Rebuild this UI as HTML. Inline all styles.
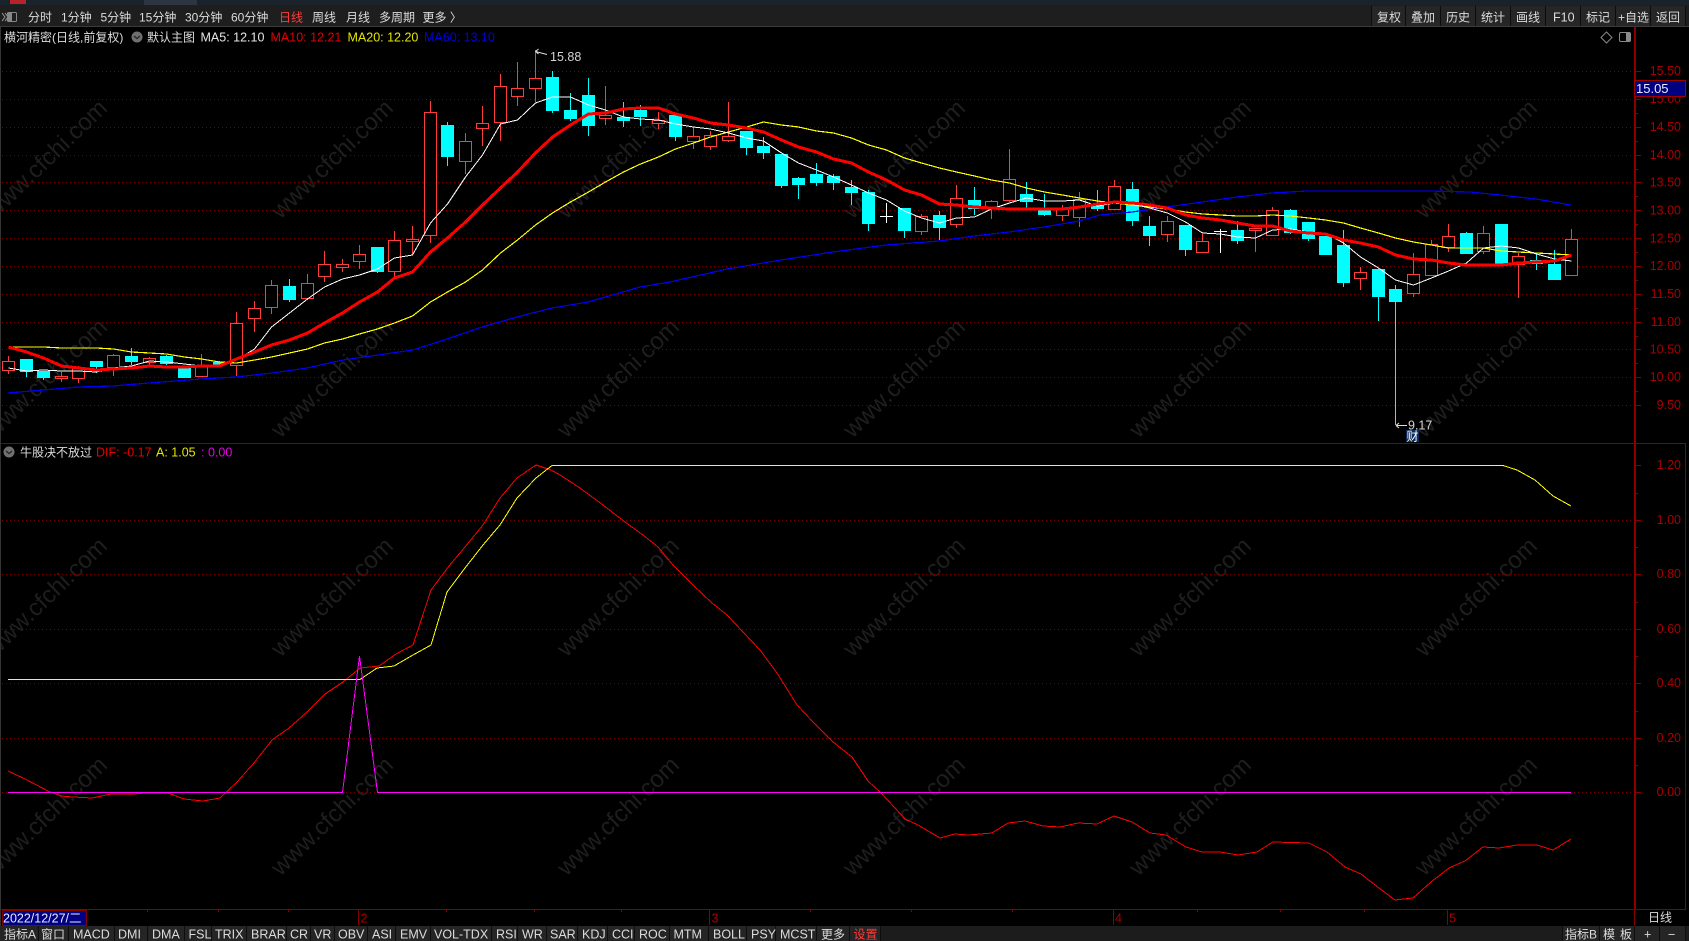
<!DOCTYPE html>
<html lang="zh"><head><meta charset="utf-8"><title>K</title>
<style>
html,body{margin:0;padding:0;background:#000;width:1689px;height:941px;overflow:hidden}
svg{display:block}
text{font-family:"Liberation Sans","Noto Sans CJK SC",sans-serif;font-size:12.5px}
.c{font-size:12px}
.tb text{fill:#dcdcdc;font-size:12px}
.tb .l{font-size:12.5px}
.ax text{fill:#a80000;font-size:12.5px;text-anchor:end}
.wm text{fill:#1e1e1e;font-size:24px;text-anchor:middle}
polyline{shape-rendering:crispEdges}
</style></head><body>
<svg xmlns="http://www.w3.org/2000/svg" width="1689" height="941" viewBox="0 0 1689 941">
<rect width="1689" height="941" fill="#000"/>
<!-- watermark -->
<g class="wm">
<text transform="translate(46,159) rotate(-44)" y="8">www.cfchi.com</text>
<text transform="translate(332,159) rotate(-44)" y="8">www.cfchi.com</text>
<text transform="translate(618,159) rotate(-44)" y="8">www.cfchi.com</text>
<text transform="translate(904,159) rotate(-44)" y="8">www.cfchi.com</text>
<text transform="translate(1190,159) rotate(-44)" y="8">www.cfchi.com</text>
<text transform="translate(1476,159) rotate(-44)" y="8">www.cfchi.com</text>
<text transform="translate(46,378) rotate(-44)" y="8">www.cfchi.com</text>
<text transform="translate(332,378) rotate(-44)" y="8">www.cfchi.com</text>
<text transform="translate(618,378) rotate(-44)" y="8">www.cfchi.com</text>
<text transform="translate(904,378) rotate(-44)" y="8">www.cfchi.com</text>
<text transform="translate(1190,378) rotate(-44)" y="8">www.cfchi.com</text>
<text transform="translate(1476,378) rotate(-44)" y="8">www.cfchi.com</text>
<text transform="translate(46,597) rotate(-44)" y="8">www.cfchi.com</text>
<text transform="translate(332,597) rotate(-44)" y="8">www.cfchi.com</text>
<text transform="translate(618,597) rotate(-44)" y="8">www.cfchi.com</text>
<text transform="translate(904,597) rotate(-44)" y="8">www.cfchi.com</text>
<text transform="translate(1190,597) rotate(-44)" y="8">www.cfchi.com</text>
<text transform="translate(1476,597) rotate(-44)" y="8">www.cfchi.com</text>
<text transform="translate(46,816) rotate(-44)" y="8">www.cfchi.com</text>
<text transform="translate(332,816) rotate(-44)" y="8">www.cfchi.com</text>
<text transform="translate(618,816) rotate(-44)" y="8">www.cfchi.com</text>
<text transform="translate(904,816) rotate(-44)" y="8">www.cfchi.com</text>
<text transform="translate(1190,816) rotate(-44)" y="8">www.cfchi.com</text>
<text transform="translate(1476,816) rotate(-44)" y="8">www.cfchi.com</text>
</g>
<!-- grid -->
<path shape-rendering="crispEdges" stroke="#7c0000" stroke-width="1" stroke-dasharray="1 3" fill="none" d="M2 71.5H1634M2 99.5H1634M2 127.5H1634M2 155.5H1634M2 182.5H1634M2 210.5H1634M2 238.5H1634M2 266.5H1634M2 294.5H1634M2 322.5H1634M2 349.5H1634M2 377.5H1634M2 405.5H1634M2 520.5H1634M2 574.5H1634M2 629.5H1634M2 683.5H1634M2 738.5H1634M2 792.5H1634"/>
<!-- down candles -->
<path shape-rendering="crispEdges" stroke="#00ffff" fill="#00ffff" stroke-width="1" d="M26.5 359V377M20.5 359.5h12v12h-12zM43.5 371V380M37.5 371.5h12v6h-12zM96.5 361V373M90.5 361.5h12v5h-12zM131.5 348V365M125.5 356.5h12v5h-12zM166.5 355V365M160.5 356.5h12v7h-12zM184.5 366V378M178.5 368.5h12v9h-12zM219.5 361V365M213.5 362.5h12v2h-12zM289.5 279V302M283.5 286.5h12v13h-12zM377.5 247V273M371.5 247.5h12v24h-12zM447.5 122V166M441.5 125.5h12v31h-12zM552.5 71V113M546.5 77.5h12v33h-12zM570.5 93V121M564.5 110.5h12v8h-12zM588.5 78V136M582.5 95.5h12v30h-12zM623.5 102V127M617.5 117.5h12v3h-12zM640.5 105V126M634.5 110.5h12v6h-12zM675.5 114V141M669.5 115.5h12v21h-12zM746.5 131V155M740.5 131.5h12v16h-12zM763.5 137V159M757.5 146.5h12v6h-12zM781.5 154V188M775.5 154.5h12v31h-12zM798.5 177V199M792.5 178.5h12v6h-12zM816.5 163V186M810.5 174.5h12v8h-12zM833.5 174V190M827.5 176.5h12v6h-12zM851.5 180V205M845.5 187.5h12v5h-12zM868.5 190V231M862.5 192.5h12v31h-12zM904.5 208V238M898.5 208.5h12v22h-12zM939.5 211V240M933.5 215.5h12v12h-12zM974.5 187V215M968.5 200.5h12v8h-12zM1026.5 182V208M1020.5 194.5h12v7h-12zM1044.5 194V216M1038.5 210.5h12v4h-12zM1097.5 190V211M1091.5 205.5h12v3h-12zM1132.5 182V226M1126.5 189.5h12v31h-12zM1149.5 216V246M1143.5 226.5h12v9h-12zM1185.5 225V256M1179.5 225.5h12v24h-12zM1237.5 221V244M1231.5 230.5h12v10h-12zM1290.5 209V234M1284.5 210.5h12v22h-12zM1308.5 222V241M1302.5 222.5h12v16h-12zM1325.5 236V255M1319.5 236.5h12v18h-12zM1343.5 230V287M1337.5 245.5h12v37h-12zM1378.5 269V321M1372.5 269.5h12v27h-12zM1395.5 285V425M1389.5 289.5h12v12h-12zM1466.5 232V254M1460.5 233.5h12v20h-12zM1501.5 224V264M1495.5 224.5h12v40h-12zM1536.5 254V270M1530.5 260.5h12v3h-12zM1554.5 250V279M1548.5 264.5h12v15h-12z"/>
<!-- up candles -->
<path shape-rendering="crispEdges" stroke="#ff3c3c" fill="#000" stroke-width="1" d="M8.5 356V361M8.5 370V374M2.5 361.5h12v9h-12zM61.5 372V376M61.5 378V382M55.5 376.5h12v2h-12zM78.5 366V368M78.5 378V383M72.5 368.5h12v10h-12zM113.5 354V355M113.5 367V376M107.5 355.5h12v12h-12zM149.5 357V358M149.5 362V366M143.5 358.5h12v4h-12zM201.5 354V366M195.5 366.5h12v10h-12zM236.5 312V323M236.5 365V376M230.5 323.5h12v42h-12zM254.5 301V308M254.5 318V332M248.5 308.5h12v10h-12zM271.5 280V285M271.5 307V314M265.5 285.5h12v22h-12zM307.5 274V283M307.5 298V300M301.5 283.5h12v15h-12zM324.5 251V264M324.5 276V282M318.5 264.5h12v12h-12zM342.5 259V264M342.5 267V272M336.5 264.5h12v3h-12zM359.5 245V254M359.5 261V269M353.5 254.5h12v7h-12zM394.5 231V240M394.5 271V277M388.5 240.5h12v31h-12zM412.5 226V239M412.5 241V255M406.5 239.5h12v2h-12zM430.5 101V112M430.5 235V243M424.5 112.5h12v123h-12zM465.5 133V141M465.5 161V174M459.5 141.5h12v20h-12zM482.5 106V123M482.5 128V146M476.5 123.5h12v5h-12zM500.5 74V86M500.5 122V141M494.5 86.5h12v36h-12zM517.5 62V88M517.5 96V106M511.5 88.5h12v8h-12zM535.5 50V78M535.5 88V102M529.5 78.5h12v10h-12zM605.5 86V115M605.5 118V125M599.5 115.5h12v3h-12zM658.5 112V120M658.5 123V129M652.5 120.5h12v3h-12zM693.5 127V136M693.5 141V149M687.5 136.5h12v5h-12zM710.5 131V135M710.5 146V150M704.5 135.5h12v11h-12zM728.5 102V136M728.5 140V142M722.5 136.5h12v4h-12zM921.5 214V216M921.5 231V235M915.5 216.5h12v15h-12zM956.5 185V198M956.5 224V228M950.5 198.5h12v26h-12zM991.5 200V201M991.5 207V219M985.5 201.5h12v6h-12zM1009.5 149V179M1009.5 200V202M1003.5 179.5h12v21h-12zM1062.5 205V208M1062.5 215V221M1056.5 208.5h12v7h-12zM1079.5 192V199M1079.5 217V227M1073.5 199.5h12v18h-12zM1114.5 180V186M1114.5 209V210M1108.5 186.5h12v23h-12zM1167.5 216V221M1167.5 234V242M1161.5 221.5h12v13h-12zM1202.5 234V241M1196.5 241.5h12v11h-12zM1255.5 230V252M1249.5 228.5h12v2h-12zM1272.5 207V210M1266.5 210.5h12v25h-12zM1360.5 267V272M1360.5 278V290M1354.5 272.5h12v6h-12zM1413.5 253V274M1413.5 293V297M1407.5 274.5h12v19h-12zM1431.5 240V244M1431.5 275V276M1425.5 244.5h12v31h-12zM1448.5 224V236M1448.5 247V252M1442.5 236.5h12v11h-12zM1483.5 226V233M1483.5 251V254M1477.5 233.5h12v18h-12zM1518.5 253V256M1518.5 264V298M1512.5 256.5h12v8h-12zM1571.5 229V239M1565.5 239.5h12v36h-12z"/>
<!-- white doji -->
<path shape-rendering="crispEdges" stroke="#fff" fill="none" d="M886.5 203V223M880 216.5H893M1220.5 229V253M1214 231.5H1227"/>
<!-- MA lines -->
<polyline fill="none" stroke="#0000ff" stroke-width="1.2" points="8,393 43,390 78,387 113,386 149,383 201,379 236,377 272,373 307,368 343,360 378,355 413,350 447,339 482,327 517,317 552,308 588,302 623,292 640,287 670,282 727,269 781,260 833,252 886,245 939,241 974,236 1009,232 1044,227 1079,221 1100,215 1132,212 1167,207 1202,202 1237,197 1272,193 1307,191 1343,191 1387,191 1430,191 1470,192 1500,195 1536,199 1571,205"/>
<polyline fill="none" stroke="#ffff00" stroke-width="1.2" points="8.5,347 26.5,347 43.5,347 61.5,348 78.5,348 96.5,348 113.5,349 131.5,352 149.5,353 166.5,354 184.5,357 201.5,359 219.5,362 236.5,363 254.5,360 271.5,357 289.5,353 307.5,349 324.5,343 342.5,339 359.5,334 377.5,329 394.5,323 412.5,316 430.5,302 447.5,292 465.5,282 482.5,270 500.5,253 517.5,240 535.5,225 552.5,213 570.5,202 588.5,192 605.5,182 623.5,172 640.5,164 658.5,157 675.5,149 693.5,143 710.5,137 728.5,132 746.5,127 763.5,122 781.5,125 798.5,127 816.5,131 833.5,133 851.5,138 868.5,145 886.5,150 904.5,158 921.5,163 939.5,168 956.5,172 974.5,176 991.5,180 1009.5,183 1026.5,188 1044.5,192 1062.5,195 1079.5,198 1097.5,201 1114.5,203 1132.5,205 1149.5,207 1167.5,209 1185.5,212 1202.5,214 1220.5,215 1237.5,216 1255.5,216 1272.5,215 1290.5,216 1308.5,218 1325.5,220 1343.5,223 1360.5,228 1378.5,233 1395.5,238 1413.5,242 1431.5,245 1448.5,248 1466.5,248 1483.5,248 1501.5,251 1518.5,252 1536.5,253 1554.5,254 1571.5,255"/>
<polyline fill="none" stroke="#ffffff" stroke-width="1" points="8.5,368 26.5,371 43.5,370 61.5,371 78.5,371 96.5,372 113.5,368 131.5,366 149.5,361 166.5,362 184.5,364 201.5,366 219.5,367 236.5,360 254.5,349 271.5,327 289.5,313 307.5,299 324.5,287 342.5,279 359.5,275 377.5,269 394.5,258 412.5,255 430.5,223 447.5,204 465.5,177 482.5,155 500.5,124 517.5,120 535.5,103 552.5,97 570.5,97 588.5,105 605.5,110 623.5,117 640.5,119 658.5,120 675.5,124 693.5,127 710.5,129 728.5,133 746.5,138 763.5,141 781.5,153 798.5,163 816.5,170 833.5,177 851.5,185 868.5,193 886.5,200 904.5,211 921.5,218 939.5,223 956.5,218 974.5,217 991.5,209 1009.5,203 1026.5,198 1044.5,201 1062.5,201 1079.5,200 1097.5,206 1114.5,203 1132.5,204 1149.5,208 1167.5,213 1185.5,222 1202.5,233 1220.5,234 1237.5,237 1255.5,238 1272.5,230 1290.5,229 1308.5,232 1325.5,233 1343.5,243 1360.5,257 1378.5,268 1395.5,280 1413.5,285 1431.5,278 1448.5,271 1466.5,263 1483.5,248 1501.5,246 1518.5,248 1536.5,254 1554.5,259 1571.5,261"/>
<polyline fill="none" stroke="#ff0000" stroke-width="3" points="8.5,347 26.5,352 43.5,358 61.5,366 78.5,368 96.5,370 113.5,369 131.5,368 149.5,366 166.5,367 184.5,367 201.5,366 219.5,366 236.5,359 254.5,352 271.5,345 289.5,340 307.5,333 324.5,323 342.5,313 359.5,302 377.5,292 394.5,278 412.5,272 430.5,252 447.5,238 465.5,222 482.5,205 500.5,188 517.5,172 535.5,153 552.5,137 570.5,125 588.5,114 605.5,113 623.5,109 640.5,108 658.5,108 675.5,114 693.5,118 710.5,123 728.5,125 746.5,128 763.5,132 781.5,140 798.5,147 816.5,152 833.5,159 851.5,163 868.5,172 886.5,180 904.5,190 921.5,195 939.5,204 956.5,205 974.5,207 991.5,208 1009.5,209 1026.5,209 1044.5,209 1062.5,209 1079.5,207 1097.5,204 1114.5,202 1132.5,203 1149.5,205 1167.5,208 1185.5,215 1202.5,218 1220.5,220 1237.5,223 1255.5,226 1272.5,226 1290.5,231 1308.5,233 1325.5,234 1343.5,240 1360.5,243 1378.5,247 1395.5,255 1413.5,259 1431.5,260 1448.5,263 1466.5,265 1483.5,265 1501.5,265 1518.5,263 1536.5,262 1554.5,261 1571.5,255"/>
<!-- high / low markers -->
<path fill="none" stroke="#ddd" stroke-width="1" d="M535.5 51.5L547 54.5M535.5 51.5l3-2.5M535.5 51.5l3 2.5M1396 425.5H1407M1396 425.5l3-2.5M1396 425.5l3 2.5"/>
<text x="550" y="61" fill="#d4d4d4">15.88</text>
<text x="1408" y="429.5" fill="#d4d4d4">9.17</text>
<rect x="1406" y="430" width="13" height="12" fill="#0a2a5a"/>
<text x="1406.5" y="440.5" fill="#fff" class="c">财</text>
<!-- lower indicator -->
<polyline fill="none" stroke="#ff0000" stroke-width="1" points="8,771 25,779 48,791 61,796 73,797 92,798 111,794 134,794 145,793 168,793 184,799 203,801 220,798 237,782 254,763 272,740 289,728 306,713 325,694 343,682 360,668 379,666 396,654 413,645 431,590 449,566 465,547 483,525 500,498 517,478 536,465 551,470 560,475 580,488 603,505 625,522 643,535 658,547 673,565 693,585 712,603 727,615 743,632 760,650 777,673 797,705 813,722 833,742 852,757 868,781 880,792 895,808 905,819 918,825 940,838 955,834 968,835 992,833 1008,823 1025,821 1043,826 1060,827 1078,823 1097,824 1114,816 1132,822 1150,833 1166,835 1186,847 1202,852 1220,852 1238,855 1257,852 1273,842 1309,843 1327,852 1345,867 1361,874 1379,888 1395,900 1413,898 1431,882 1449,868 1465,861 1483,847 1499,848 1517,845 1537,845 1553,850 1571,839"/>
<polyline fill="none" stroke="#ffff00" stroke-width="1" points="8,679.5 360,679.5 377,668 394,666 413,655 431,645 447,592 465,568 483,545 500,525 517,498 536,478 552,465.5 1503,465.5 1517,470 1535,480 1553,496 1571,506"/>
<polyline fill="none" stroke="#ff00ff" stroke-width="1" points="8,792.5 342.5,792.5 359.5,656 377.5,792.5 1571,792.5"/>
<!-- frame lines -->
<g shape-rendering="crispEdges" fill="#8a0000">
<rect x="0" y="443" width="1686" height="1"/>
<rect x="0" y="909" width="1686" height="1"/>
<rect x="1634" y="27" width="2" height="882"/>
<rect x="1634" y="910" width="1" height="16"/>
<rect x="1685" y="443" width="1" height="467"/>
<rect x="0" y="27" width="1" height="899" fill="#333"/>
<rect x="358" y="910" width="1" height="15"/><rect x="709" y="910" width="1" height="15"/><rect x="1113" y="910" width="1" height="15"/><rect x="1447" y="910" width="1" height="15"/>
<rect x="147" y="910" width="1" height="2"/><rect x="218" y="910" width="1" height="2"/><rect x="288" y="910" width="1" height="2"/><rect x="446" y="910" width="1" height="2"/><rect x="534" y="910" width="1" height="2"/><rect x="621" y="910" width="1" height="2"/><rect x="810" y="910" width="1" height="2"/><rect x="911" y="910" width="1" height="2"/><rect x="1012" y="910" width="1" height="2"/><rect x="1197" y="910" width="1" height="2"/><rect x="1280" y="910" width="1" height="2"/><rect x="1364" y="910" width="1" height="2"/>
</g>
<!-- axis ticks -->
<path shape-rendering="crispEdges" stroke="#8a0000" fill="none" d="M1636 71.5h5M1636 99.5h5M1636 127.5h5M1636 155.5h5M1636 182.5h5M1636 210.5h5M1636 238.5h5M1636 266.5h5M1636 294.5h5M1636 322.5h5M1636 349.5h5M1636 377.5h5M1636 405.5h5M1636 85.5h2M1636 113.5h2M1636 141.5h2M1636 169.5h2M1636 196.5h2M1636 224.5h2M1636 252.5h2M1636 280.5h2M1636 308.5h2M1636 336.5h2M1636 363.5h2M1636 391.5h2M1636 465.5h5M1636 520.5h5M1636 574.5h5M1636 629.5h5M1636 683.5h5M1636 738.5h5M1636 792.5h5M1636 493.5h2M1636 547.5h2M1636 602.5h2M1636 656.5h2M1636 711.5h2M1636 765.5h2"/>
<g class="ax">
<text x="1681" y="75">15.50</text><text x="1681" y="103">15.00</text><text x="1681" y="131">14.50</text><text x="1681" y="159">14.00</text><text x="1681" y="186.5">13.50</text><text x="1681" y="214.5">13.00</text><text x="1681" y="242.5">12.50</text><text x="1681" y="270">12.00</text><text x="1681" y="298">11.50</text><text x="1681" y="326">11.00</text><text x="1681" y="353.5">10.50</text><text x="1681" y="381">10.00</text><text x="1681" y="409">9.50</text>
<text x="1681" y="469">1.20</text><text x="1681" y="524">1.00</text><text x="1681" y="578">0.80</text><text x="1681" y="633">0.60</text><text x="1681" y="687">0.40</text><text x="1681" y="742">0.20</text><text x="1681" y="796">0.00</text>
</g>
<!-- price tag -->
<rect x="1634.5" y="80.5" width="51" height="16" fill="#000080" stroke="#a00000"/>
<text x="1636" y="93" fill="#e8e8ff" style="font-size:13px">15.05</text>
<!-- title rows -->
<text x="4" y="41.5" fill="#dcdcdc" class="c">横河精密(日线,前复权)</text>
<circle cx="137" cy="37" r="5.5" fill="#707070"/><path d="M134 36l3 2.6 3-2.6" fill="none" stroke="#222" stroke-width="1.2"/>
<text x="147" y="41.5" fill="#dcdcdc" class="c">默认主图</text>
<text x="200.5" y="41.5" fill="#e6e6e6">MA5: 12.10</text>
<text x="270.5" y="41.5" fill="#e60000">MA10: 12.21</text>
<text x="347.5" y="41.5" fill="#e6e600">MA20: 12.20</text>
<text x="424" y="41.5" fill="#0000e6">MA60: 13.10</text>
<path d="M1606.5 32l5.5 5.5-5.5 5.5-5.5-5.5z" fill="none" stroke="#8a8a8a"/>
<rect x="1619.5" y="32.5" width="11" height="9" rx="1.5" fill="none" stroke="#8a8a8a"/><rect x="1626" y="33" width="4" height="8" fill="#8a8a8a"/>
<circle cx="9" cy="452" r="5.5" fill="#707070"/><path d="M6 451l3 2.6 3-2.6" fill="none" stroke="#222" stroke-width="1.2"/>
<text x="20" y="456.5" fill="#dcdcdc" class="c">牛股决不放过</text>
<text x="96" y="456.5" fill="#e60000">DIF: -0.17</text>
<text x="156" y="456.5" fill="#e6e600">A: 1.05</text>
<text x="201" y="456.5" fill="#e600e6">: 0.00</text>
<!-- top strip + toolbar -->
<rect width="1689" height="5" fill="#1a222b"/>
<rect x="144" width="53" height="5" fill="#2c3540"/>
<rect x="10" width="16" height="4" fill="#b8232a"/>
<rect y="5" width="1689" height="21" fill="#1e1e1e"/>
<rect y="26" width="1689" height="1" fill="#3a3a3a"/>
<rect x="1372" y="6" width="314" height="20" fill="#262626"/>
<path shape-rendering="crispEdges" stroke="#0c0c0c" d="M1371.5 6V26M1405.5 6V26M1440.5 6V26M1475.5 6V26M1510.5 6V26M1545.5 6V26M1580.5 6V26M1615.5 6V26M1650.5 6V26M1685.5 6V26"/>
<path d="M2 13l3 4-3 4M5 13l3 4-3 4" fill="none" stroke="#999" stroke-width="1"/>
<rect x="7.5" y="12.5" width="9" height="9" rx="1" fill="#1e1e1e" stroke="#888"/><rect x="8" y="13" width="4" height="8" fill="#888"/>
<g class="tb">
<text x="28" y="21.5">分时</text><text x="61" y="21.5">1分钟</text><text x="100.5" y="21.5">5分钟</text><text x="139" y="21.5">15分钟</text><text x="185" y="21.5">30分钟</text><text x="231" y="21.5">60分钟</text>
<text x="279" y="21.5" style="fill:#ff3c3c">日线</text><text x="312" y="21.5">周线</text><text x="346" y="21.5">月线</text><text x="379" y="21.5">多周期</text><text x="422.5" y="21.5">更多 〉</text>
<text x="1377" y="21.5">复权</text><text x="1411" y="21.5">叠加</text><text x="1446" y="21.5">历史</text><text x="1481" y="21.5">统计</text><text x="1516" y="21.5">画线</text><text x="1553" y="21.5" class="l">F10</text><text x="1586" y="21.5">标记</text><text x="1618" y="21.5">+自选</text><text x="1656" y="21.5">返回</text>
</g>
<!-- time axis -->
<rect x="2.5" y="910.5" width="84" height="15" fill="#000080" stroke="#8a0000"/>
<text x="3" y="922.5" fill="#e8e8ff" style="font-size:12.5px">2022/12/27/二</text>
<g fill="#a80000"><text x="360.5" y="922.5">2</text><text x="711.5" y="922.5">3</text><text x="1115" y="922.5">4</text><text x="1449" y="922.5">5</text></g>
<text x="1648" y="921.5" fill="#dcdcdc" class="c">日线</text>
<!-- bottom tabs -->
<rect y="926" width="1689" height="15" fill="#1c1c1c"/>
<rect x="0" y="926" width="880" height="15" fill="#252525"/>
<rect x="1563" y="926" width="123" height="15" fill="#252525"/>
<path shape-rendering="crispEdges" stroke="#0e0e0e" d="M38.5 926V941M68.5 926V941M114.5 926V941M147.5 926V941M184.5 926V941M211.5 926V941M246.5 926V941M286.5 926V941M310.5 926V941M334.5 926V941M367.5 926V941M395.5 926V941M430.5 926V941M491.5 926V941M517.5 926V941M546.5 926V941M577.5 926V941M607.5 926V941M634.5 926V941M669.5 926V941M708.5 926V941M746.5 926V941M775.5 926V941M816.5 926V941M849.5 926V941M880.5 926V941M1562.5 926V941M1599.5 926V941M1634.5 926V941M1659.5 926V941M1685.5 926V941"/>
<g class="tb">
<text x="4" y="938.5">指标A</text><text x="41" y="938.5">窗口</text>
<text x="73" y="938.5" class="l">MACD</text><text x="118" y="938.5" class="l">DMI</text><text x="152" y="938.5" class="l">DMA</text><text x="188.5" y="938.5" class="l">FSL</text><text x="215" y="938.5" class="l">TRIX</text><text x="251" y="938.5" class="l">BRAR</text><text x="290" y="938.5" class="l">CR</text><text x="314" y="938.5" class="l">VR</text><text x="338" y="938.5" class="l">OBV</text><text x="372" y="938.5" class="l">ASI</text><text x="400" y="938.5" class="l">EMV</text><text x="434" y="938.5" class="l">VOL-TDX</text><text x="496" y="938.5" class="l">RSI</text><text x="522" y="938.5" class="l">WR</text><text x="550" y="938.5" class="l">SAR</text><text x="582" y="938.5" class="l">KDJ</text><text x="612" y="938.5" class="l">CCI</text><text x="639" y="938.5" class="l">ROC</text><text x="673.5" y="938.5" class="l">MTM</text><text x="713" y="938.5" class="l">BOLL</text><text x="751" y="938.5" class="l">PSY</text><text x="780" y="938.5" class="l">MCST</text>
<text x="821" y="938.5">更多</text><text x="853.5" y="938.5" style="fill:#ff3c3c">设置</text>
<text x="1565" y="938.5">指标B</text><text x="1603" y="938.5">模</text><text x="1620" y="938.5">板</text><text x="1644" y="938.5" class="l">+</text><text x="1668" y="938.5" class="l">−</text>
</g>
</svg>
</body></html>
